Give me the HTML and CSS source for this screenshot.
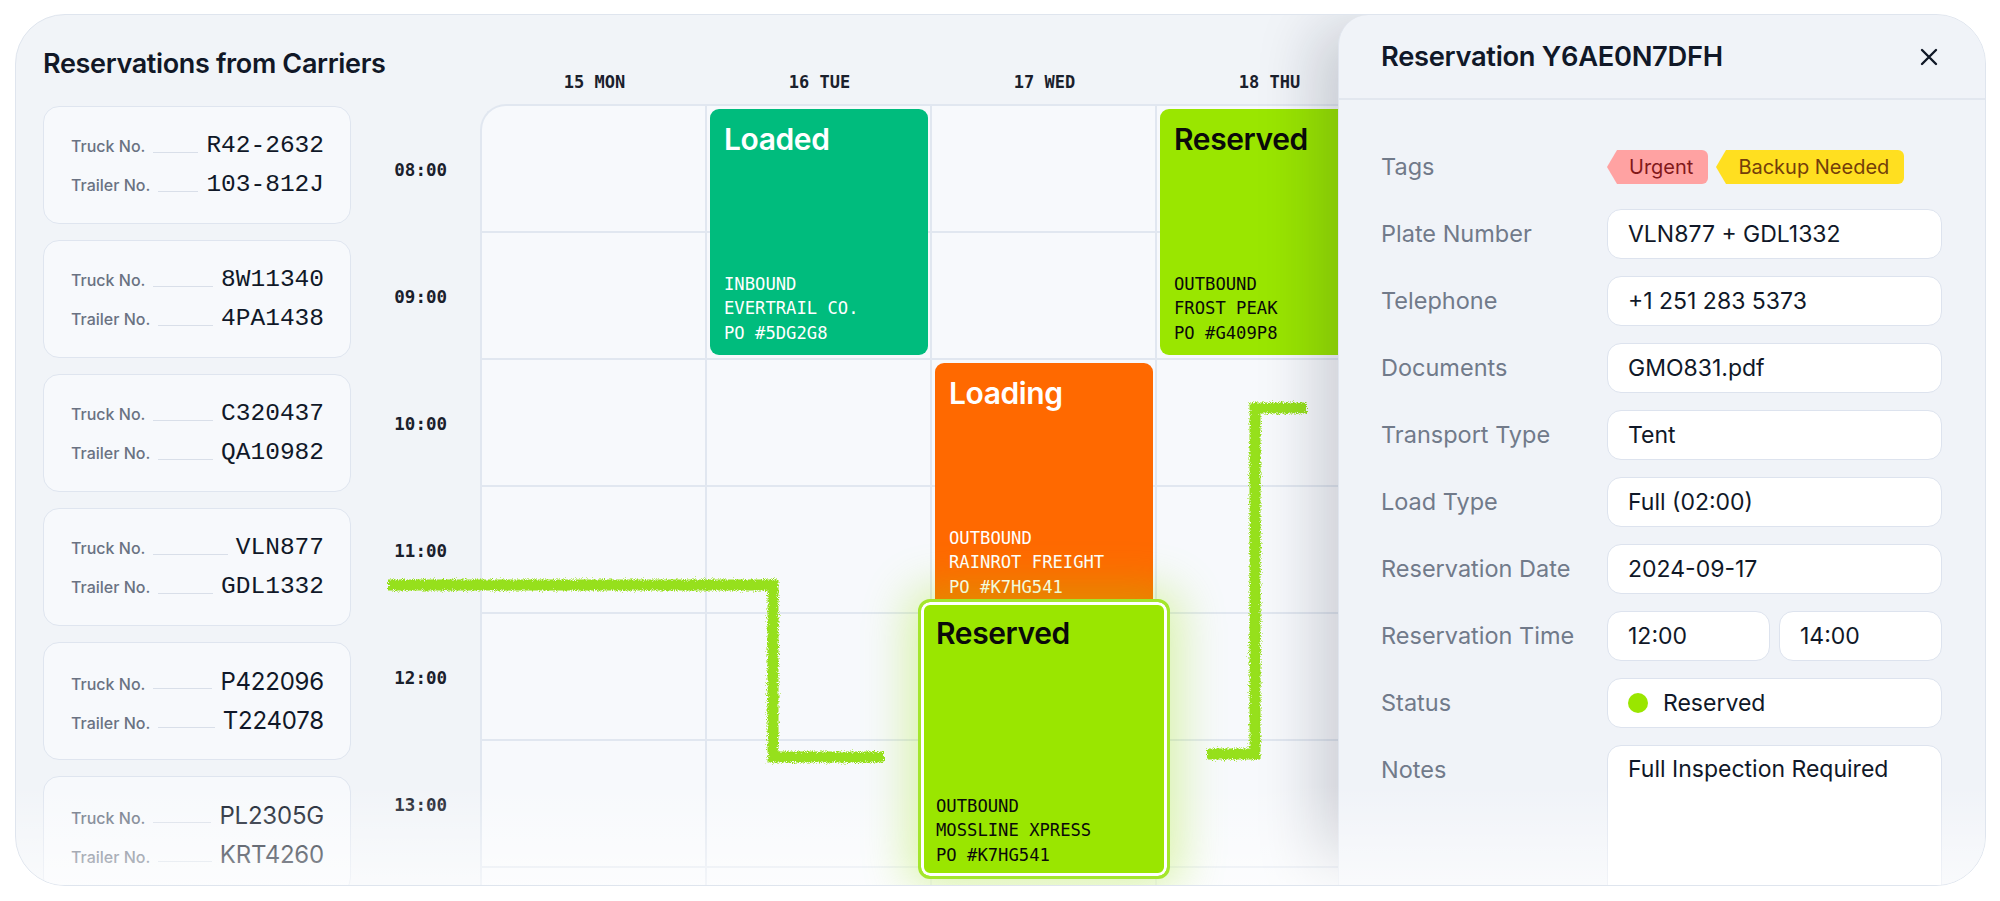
FILE: index.html
```html
<!DOCTYPE html>
<html lang="en">
<head>
<meta charset="utf-8">
<title>Reservations from Carriers</title>
<link rel="stylesheet" href="styles.css">
</head>
<body>
<div class="frame">
  <section class="carriers">
    <h1 class="carriers-title">Reservations from Carriers</h1>
    <div class="carrier-list">
      <div class="carrier">
        <div class="carrier-row"><span class="c-label">Truck No.</span><span class="c-dash"></span><span class="c-value">R42-2632</span></div>
        <div class="carrier-row"><span class="c-label">Trailer No.</span><span class="c-dash"></span><span class="c-value">103-812J</span></div>
      </div>
      <div class="carrier">
        <div class="carrier-row"><span class="c-label">Truck No.</span><span class="c-dash"></span><span class="c-value">8W11340</span></div>
        <div class="carrier-row"><span class="c-label">Trailer No.</span><span class="c-dash"></span><span class="c-value">4PA1438</span></div>
      </div>
      <div class="carrier">
        <div class="carrier-row"><span class="c-label">Truck No.</span><span class="c-dash"></span><span class="c-value">C320437</span></div>
        <div class="carrier-row"><span class="c-label">Trailer No.</span><span class="c-dash"></span><span class="c-value">QA10982</span></div>
      </div>
      <div class="carrier">
        <div class="carrier-row"><span class="c-label">Truck No.</span><span class="c-dash"></span><span class="c-value">VLN877</span></div>
        <div class="carrier-row"><span class="c-label">Trailer No.</span><span class="c-dash"></span><span class="c-value">GDL1332</span></div>
      </div>
      <div class="carrier">
        <div class="carrier-row"><span class="c-label">Truck No.</span><span class="c-dash"></span><span class="c-value c-sans">P422096</span></div>
        <div class="carrier-row"><span class="c-label">Trailer No.</span><span class="c-dash"></span><span class="c-value c-sans">T224078</span></div>
      </div>
      <div class="carrier">
        <div class="carrier-row"><span class="c-label">Truck No.</span><span class="c-dash"></span><span class="c-value c-sans">PL2305G</span></div>
        <div class="carrier-row"><span class="c-label">Trailer No.</span><span class="c-dash"></span><span class="c-value c-sans">KRT4260</span></div>
      </div>
    </div>
  </section>

  <section class="schedule">
    <div class="days">
      <div class="day">15 MON</div>
      <div class="day">16 TUE</div>
      <div class="day">17 WED</div>
      <div class="day">18 THU</div>
      <div class="day">19 FRI</div>
    </div>
    <div class="sched-body">
      <div class="times">
        <div class="time">08:00</div>
        <div class="time">09:00</div>
        <div class="time">10:00</div>
        <div class="time">11:00</div>
        <div class="time">12:00</div>
        <div class="time">13:00</div>
      </div>
      <div class="grid">
        <div class="event ev-loaded">
          <div class="ev-title">Loaded</div>
          <div class="ev-meta">INBOUND<br>EVERTRAIL CO.<br>PO #5DG2G8</div>
        </div>
        <div class="event ev-reserved-thu">
          <div class="ev-title">Reserved</div>
          <div class="ev-meta">OUTBOUND<br>FROST PEAK<br>PO #G409P8</div>
        </div>
        <div class="event ev-loading">
          <div class="ev-title">Loading</div>
          <div class="ev-meta">OUTBOUND<br>RAINROT FREIGHT<br>PO #K7HG541</div>
        </div>
        <div class="event ev-selected">
          <div class="ev-title">Reserved</div>
          <div class="ev-meta">OUTBOUND<br>MOSSLINE XPRESS<br>PO #K7HG541</div>
        </div>
      </div>
    </div>
  </section>

  <svg class="connector" width="1969" height="870" viewBox="16 15 1969 870" aria-hidden="true">
    <defs>
      <filter id="spray" filterUnits="userSpaceOnUse" x="0" y="0" width="2000" height="901">
        <feTurbulence type="fractalNoise" baseFrequency="1.1" numOctaves="2" seed="4" result="noise"/>
        <feDisplacementMap in="SourceGraphic" in2="noise" scale="7" xChannelSelector="R" yChannelSelector="G" result="rough"/>
        <feGaussianBlur in="rough" stdDeviation="0.6"/>
      </filter>
    </defs>
    <g fill="none" stroke="#96e01c" stroke-width="11" stroke-linejoin="miter" filter="url(#spray)">
      <path d="M388 585 H773 V757 H884"/>
      <path d="M1207 754 H1255 V408 H1307"/>
    </g>
  </svg>

  <aside class="panel">
    <header class="panel-head">
      <h2 class="panel-title">Reservation Y6AE0N7DFH</h2>
      <span class="close" aria-label="Close">
        <svg width="18" height="18" viewBox="0 0 18 18"><path d="M2 2 L16 16 M16 2 L2 16" stroke="#111827" stroke-width="2.4" stroke-linecap="round"/></svg>
      </span>
    </header>
    <div class="fields">
      <div class="field">
        <span class="f-label">Tags</span>
        <div class="tags">
          <span class="tag tag-red">Urgent</span>
          <span class="tag tag-yellow">Backup Needed</span>
        </div>
      </div>
      <div class="field">
        <span class="f-label">Plate Number</span>
        <div class="input">VLN877 + GDL1332</div>
      </div>
      <div class="field">
        <span class="f-label">Telephone</span>
        <div class="input">+1 251 283 5373</div>
      </div>
      <div class="field">
        <span class="f-label">Documents</span>
        <div class="input">GMO831.pdf</div>
      </div>
      <div class="field">
        <span class="f-label">Transport Type</span>
        <div class="input">Tent</div>
      </div>
      <div class="field">
        <span class="f-label">Load Type</span>
        <div class="input">Full (02:00)</div>
      </div>
      <div class="field">
        <span class="f-label">Reservation Date</span>
        <div class="input">2024-09-17</div>
      </div>
      <div class="field">
        <span class="f-label">Reservation Time</span>
        <div class="pair">
          <div class="input">12:00</div>
          <div class="input">14:00</div>
        </div>
      </div>
      <div class="field">
        <span class="f-label">Status</span>
        <div class="input status"><span class="dot"></span>Reserved</div>
      </div>
      <div class="field field-notes">
        <span class="f-label">Notes</span>
        <div class="input notes">Full Inspection Required</div>
      </div>
    </div>
  </aside>

  <div class="fade"></div>
</div>
</body>
</html>
```

FILE: styles.css
```css
* { box-sizing: border-box; }

html, body { margin: 0; }

body {
  background: #ffffff;
  padding: 14px 14px 0 15px;
  font-family: Inter, "Noto Sans", "Liberation Sans", sans-serif;
  color: #101828;
}

.frame {
  position: relative;
  width: 1971px;
  height: 872px;
  border: 1px solid #dfe5ee;
  border-radius: 50px;
  background: #f1f4f8;
  overflow: hidden;
  display: flex;
}

/* ---------- carriers ---------- */
.carriers {
  flex: 0 0 335px;
  min-width: 0;
  padding: 34px 0 0 27px;
  display: flex;
  flex-direction: column;
  gap: 27px;
}

.carriers-title {
  flex-shrink: 0;
  margin: 0;
  font-size: 27px;
  line-height: 30px;
  font-weight: 600;
  letter-spacing: -0.35px;
  color: #111827;
  white-space: nowrap;
}

.carrier-list {
  flex-shrink: 0;
  display: flex;
  flex-direction: column;
  gap: 16px;
}

.carrier {
  flex: 0 0 118px;
  width: 308px;
  border: 1.5px solid #dfe5ef;
  border-radius: 16px;
  background: #f7f9fc;
  padding: 0 26px 0 27px;
  display: flex;
  flex-direction: column;
  justify-content: center;
}

.carrier-row {
  display: flex;
  align-items: baseline;
  height: 39px;
  line-height: 39px;
}

.c-label {
  font-size: 16px;
  font-weight: 500;
  color: #6a7282;
  white-space: nowrap;
}

.c-dash {
  flex: 1;
  align-self: flex-end;
  height: 0;
  border-bottom: 1.5px solid #d9dfe9;
  margin: 0 8px 12px;
}

.c-value {
  font-family: "Liberation Mono", "DejaVu Sans Mono", monospace;
  font-size: 24.5px;
  color: #101828;
  white-space: nowrap;
}

.c-value.c-sans {
  font-family: Inter, "Noto Sans", sans-serif;
  font-size: 24px;
  letter-spacing: -0.2px;
}

/* ---------- schedule ---------- */
.schedule {
  flex: 0 0 auto;
  display: flex;
  flex-direction: column;
}

.days {
  flex-shrink: 0;
  display: flex;
  align-items: flex-end;
  height: 89px;
  padding: 0 0 12px 131px;
}

.day {
  flex: 0 0 225px;
  text-align: center;
  font-family: "DejaVu Sans Mono", "Liberation Mono", monospace;
  font-weight: 700;
  font-size: 17px;
  line-height: 20px;
  color: #1a202c;
}

.sched-body {
  flex-shrink: 0;
  display: flex;
}

.times {
  flex: 0 0 129px;
  padding-top: 2px;
}

.time {
  height: 127px;
  display: flex;
  align-items: center;
  justify-content: flex-end;
  padding-right: 33px;
  font-family: "DejaVu Sans Mono", "Liberation Mono", monospace;
  font-weight: 700;
  font-size: 17.5px;
  color: #1a202c;
}

.grid {
  flex-shrink: 0;
  display: grid;
  grid-template-columns: repeat(5, 225px);
  grid-template-rows: repeat(7, 127px);
  border-left: 2px solid #e1e7f0;
  border-top: 2px solid #e1e7f0;
  border-top-left-radius: 26px;
  background-color: #f7f9fc;
  background-image:
    repeating-linear-gradient(to right, transparent 0 223px, #e1e7f0 223px 225px),
    repeating-linear-gradient(to bottom, transparent 0 125px, #e1e7f0 125px 127px);
}

.event {
  display: flex;
  flex-direction: column;
  justify-content: space-between;
  border-radius: 9px;
  padding: 12px 14px 10px;
  margin: 3px 4px 5px 3px;
  position: relative;
}

.ev-title {
  font-size: 30px;
  line-height: 36px;
  font-weight: 600;
  letter-spacing: -0.4px;
  white-space: nowrap;
}

.ev-meta {
  font-family: "DejaVu Sans Mono", "Liberation Mono", monospace;
  font-size: 17.2px;
  line-height: 24.5px;
  white-space: nowrap;
}

.ev-loaded {
  grid-column: 2;
  grid-row: 1 / span 2;
  background: #00bc7d;
  color: #ffffff;
}

.ev-reserved-thu {
  grid-column: 4;
  grid-row: 1 / span 2;
  background: #9ae600;
  color: #0a0a0a;
}

.ev-loading {
  grid-column: 3;
  grid-row: 3 / span 2;
  background: #ff6900;
  color: #ffffff;
}

.ev-selected {
  grid-column: 3;
  grid-row: 5 / span 2;
  margin: -15px -13px -11px -14px;
  padding: 13px 15px 9px;
  border: 3px solid #a4e62c;
  border-radius: 12px;
  background: #9ae600;
  color: #0a0a0a;
  box-shadow: inset 0 0 0 3px #ffffff, 0 0 46px 10px rgba(154, 230, 0, 0.33);
  z-index: 11;
}

/* ---------- connector ---------- */
.connector {
  position: absolute;
  left: 0;
  top: 0;
  pointer-events: none;
  z-index: 2;
}

/* ---------- panel ---------- */
.panel {
  position: absolute;
  top: 0;
  right: 0;
  bottom: 0;
  width: 647px;
  background: #f0f3f8;
  border-left: 1.5px solid #e0e5ee;
  border-top-left-radius: 30px;
  box-shadow: -34px 0 60px -12px rgba(15, 23, 42, 0.18);
  z-index: 5;
}

.panel-head {
  height: 85px;
  border-bottom: 2px solid #e2e7ef;
  display: flex;
  align-items: center;
  justify-content: space-between;
  padding: 0 47px 0 42px;
}

.panel-title {
  margin: 0;
  font-size: 27.3px;
  line-height: 34px;
  font-weight: 600;
  letter-spacing: -0.3px;
  color: #101828;
  white-space: nowrap;
}

.close {
  display: flex;
  width: 18px;
  height: 18px;
}

.fields {
  display: flex;
  flex-direction: column;
  gap: 17px;
  padding: 42px 43px 0 42px;
}

.field {
  display: flex;
  align-items: center;
  height: 50px;
  flex-shrink: 0;
}

.f-label {
  flex: 0 0 226px;
  font-size: 23.5px;
  line-height: 50px;
  color: #717a8a;
  white-space: nowrap;
}

.input {
  flex: 1;
  height: 50px;
  display: flex;
  align-items: center;
  padding: 0 20px;
  background: #ffffff;
  border: 1.5px solid #dde3ee;
  border-radius: 14px;
  font-size: 23px;
  color: #101828;
  white-space: nowrap;
}

.pair {
  flex: 1;
  display: flex;
  gap: 9px;
}

.status {
  gap: 15px;
}

.dot {
  width: 20px;
  height: 20px;
  border-radius: 50%;
  background: #9ae600;
}

.field-notes {
  align-items: flex-start;
  height: 180px;
}

.notes {
  height: 180px;
  align-items: flex-start;
  line-height: 47px;
}

.tags {
  flex: 1;
  display: flex;
  gap: 8px;
}

.tag {
  position: relative;
  margin-left: 10px;
  height: 34px;
  line-height: 34px;
  padding: 0 15px 0 12px;
  border-radius: 0 6px 6px 0;
  font-size: 20px;
  white-space: nowrap;
}

.tag::before {
  content: "";
  position: absolute;
  left: -10px;
  top: 0;
  border-top: 17px solid transparent;
  border-bottom: 17px solid transparent;
  border-right: 10px solid currentColor;
}

.tag-red {
  background: #ffa2a2;
  color: #82181a;
}

.tag-red::before { border-right-color: #ffa2a2; }

.tag-yellow {
  background: #ffdf20;
  color: #733e0a;
}

.tag-yellow::before { border-right-color: #ffdf20; }

/* ---------- bottom fade ---------- */
.fade {
  position: absolute;
  left: 0;
  right: 0;
  bottom: 0;
  height: 100px;
  background: linear-gradient(to bottom, rgba(255, 255, 255, 0), rgba(255, 255, 255, 0.6));
  pointer-events: none;
  z-index: 10;
}
```
